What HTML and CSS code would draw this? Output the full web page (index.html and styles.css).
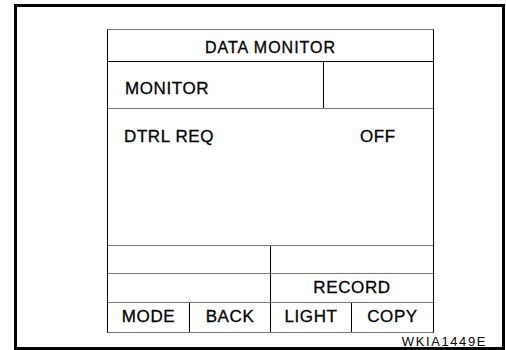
FILE: index.html
```html
<!DOCTYPE html>
<html lang="en">
<head>
  <meta charset="UTF-8">
  <title>Data Monitor</title>
  <link rel="stylesheet" href="styles.css">
</head>
<body>
  <div class="frame">
    <div class="screen">
      <div class="row header">DATA MONITOR</div>

      <div class="row monitor">
        <div class="cell monitor-label">MONITOR</div>
        <div class="cell monitor-side"></div>
      </div>

      <div class="row values">
        <div class="item">DTRL REQ</div>
        <div class="value">OFF</div>
      </div>

      <div class="row split blank">
        <div class="cell half"></div>
        <div class="cell half right"></div>
      </div>

      <div class="row split record">
        <div class="cell half"></div>
        <div class="cell half right">RECORD</div>
      </div>

      <div class="row buttons">
        <div class="btn">MODE</div>
        <div class="btn">BACK</div>
        <div class="btn">LIGHT</div>
        <div class="btn">COPY</div>
      </div>
    </div>
    <div class="code">WKIA1449E</div>
  </div>
</body>
</html>
```

FILE: styles.css
```css
* {
  box-sizing: border-box;
}

body {
  margin: 0;
  background: #fff;
  font-family: 'Liberation Sans', Arial, sans-serif;
  color: #000;
}

.frame {
  margin: 4px 0 0 14px;
  width: 491px;
  height: 346px;
  border: 3px solid #000;
  padding: 22px 0 0 90px;
}

.screen {
  width: 327px;
  border: 1px solid #000;
  border-top-color: #777;
  border-bottom-color: #777;
}

.row {
  display: flex;
  line-height: 1;
  font-size: 17px;
  letter-spacing: 0.6px;
  -webkit-text-stroke: 0.3px #000;
}

.header {
  height: 32px;
  border-bottom: 1px solid #000;
  justify-content: center;
  padding-top: 10px;
  font-size: 16px;
  letter-spacing: 1px;
}

.monitor {
  height: 47px;
  border-bottom: 1px solid #777;
}

.monitor-label {
  width: 215px;
  padding: 18px 0 0 17px;
}

.monitor-side {
  flex: 1;
  border-left: 1px solid #000;
}

.values {
  height: 137px;
  border-bottom: 1px solid #777;
  padding: 19px 0 0 16px;
}

.item {
  width: 236px;
}

.split .half {
  width: 162px;
}

.split .right {
  flex: 1;
  border-left: 1px solid #000;
  text-align: center;
}

.blank {
  height: 28px;
  border-bottom: 1px solid #777;
}

.record {
  height: 29px;
  border-bottom: 1px solid #777;
}

.record .right {
  padding-top: 5px;
}

.buttons {
  height: 29px;
}

.btn {
  width: 81px;
  padding-top: 5px;
  text-align: center;
  border-left: 1px solid #000;
}

.btn:first-child {
  border-left: none;
}

.btn:last-child {
  flex: 1;
}

.code {
  width: 380px;
  text-align: right;
  margin-top: 2px;
  font-size: 13px;
  line-height: 1;
  letter-spacing: 1.6px;
}
```
